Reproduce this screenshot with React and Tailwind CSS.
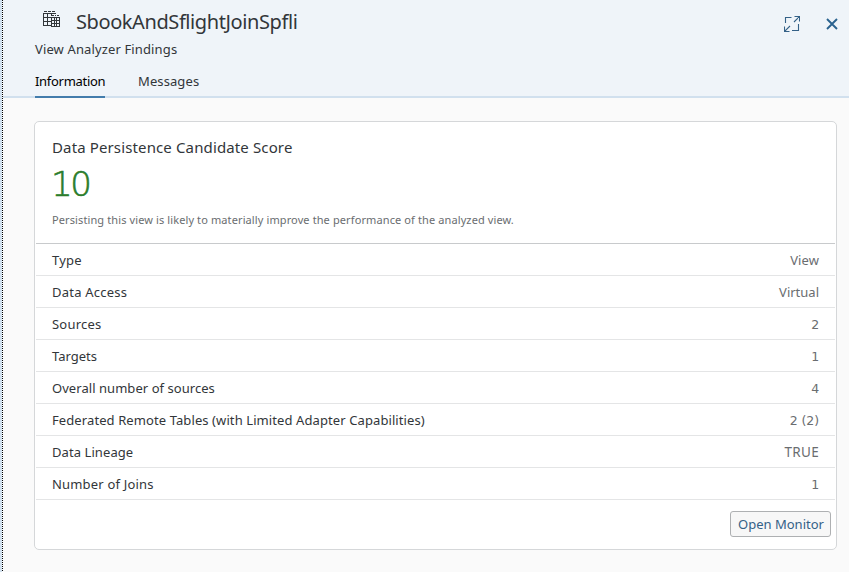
const rows = [
  ['Type', 'View', 'tracking-[.2px]', 'tracking-[.1px]'],
  ['Data Access', 'Virtual', 'tracking-[.22px]', 'tracking-normal'],
  ['Sources', '2', 'tracking-[.2px]', 'tracking-normal'],
  ['Targets', '1', 'tracking-normal', 'tracking-normal'],
  ['Overall number of sources', '4', 'tracking-[.05px]', 'tracking-normal'],
  ['Federated Remote Tables (with Limited Adapter Capabilities)', '2 (2)', 'tracking-[.095px]', 'tracking-normal'],
  ['Data Lineage', 'TRUE', 'tracking-[.08px]', 'text-[13.5px] tracking-[.3px]'],
  ['Number of Joins', '1', 'tracking-[.18px]', 'tracking-normal'],
];

function TablesIcon() {
  return (
    <svg className="h-[18px] w-[18px]" viewBox="0 0 18 18" fill="none" stroke="#32363a" shapeRendering="crispEdges">
      <path d="M2 1.5H5M6 1.5H9M10 1.5H13" />
      <path d="M1.5 3V16M1 3.5H14M1 7.5H9M1 11.5H9M1 15.5H9M5.5 3V16M9.5 3V6" />
      <path d="M10 5.5H12M13 5.5H14M15 5.5H17M9 7.5H18M9 10.5H18M9 13.5H18M9 16.5H18M9.5 7V17M12.5 7V17M14.5 7V17M17.5 7V17" />
    </svg>
  );
}

function ExpandIcon() {
  return (
    <svg className="h-4 w-4" viewBox="0 0 16 16" fill="none" stroke="#346187" strokeWidth="1.1">
      <path d="M1.5 7V1.5H7.5M14.5 8V14.5H8" />
      <path d="M10.5 .5H15.5V5.5M15.4 .6L10 6M5.5 15.5H.5V10.5M.6 15.4L6 10" />
    </svg>
  );
}

function CloseIcon() {
  return (
    <svg className="h-3 w-3" viewBox="0 0 12 12" fill="none" stroke="#2a628f" strokeWidth="1.9">
      <path d="M1 1L11 11M11 1L1 11" />
    </svg>
  );
}

export default function App() {
  return (
    <div className="flex h-[572px] w-[849px] overflow-hidden bg-[#fafafa] font-['Noto_Sans',sans-serif] text-[13px] text-[#32363a]">
      <div className="w-[2px] shrink-0 bg-[#d1e0ee]" />
      <div className="w-px shrink-0 bg-[repeating-linear-gradient(to_bottom,#000_0_1px,#fff_1px_2px)]" />
      <main className="flex min-w-0 grow flex-col">
        <header className="flex h-[98px] shrink-0 flex-col bg-[#eff4f9] bg-[linear-gradient(#d1e0ee,#d1e0ee)] bg-[length:100%_2px] bg-bottom bg-no-repeat pl-8">
          <div className="flex h-[38px] items-center pt-[9px]">
            <div className="mb-[9px] ml-[7px]"><TablesIcon /></div>
            <h1 className="mb-[4px] ml-[16px] whitespace-nowrap text-[20px] leading-6 tracking-[-.41px]">SbookAndSflightJoinSpfli</h1>
            <div className="ml-auto mr-[11px] flex items-center gap-[26px]">
              <button><ExpandIcon /></button>
              <button><CloseIcon /></button>
            </div>
          </div>
          <p className="h-[22px] leading-[22px] tracking-[.13px]">View Analyzer Findings</p>
          <nav className="flex h-[38px] gap-8 leading-[43px]">
            <button className="h-[38px] w-[70px] whitespace-nowrap border-b-2 border-[#427cac] text-left tracking-[-.3px] text-black">Information</button>
            <button className="ml-px whitespace-nowrap text-left tracking-[.1px]">Messages</button>
          </nav>
        </header>
        <section className="ml-[31px] mt-[23px] flex h-[429px] w-[803px] flex-col rounded-[5px] border border-[#d5d7d9] bg-white px-px">
          <div className="h-[122px] border-b border-[#c8cacc] pl-4">
            <h2 className="pt-[14px] text-[15px] leading-[22px] tracking-[.13px]">Data Persistence Candidate Score</h2>
            <div className="ml-[-1px] mt-[4px] font-['DejaVu_Sans',sans-serif] text-[34px] font-extralight leading-[44px] tracking-[-2.3px] text-[#2b7d2b] [-webkit-text-stroke:0.6px_#2b7d2b]">10</div>
            <p className="mt-[5px] text-[11px] leading-[18px] tracking-[.11px] text-[#6a6d70]">Persisting this view is likely to materially improve the performance of the analyzed view.</p>
          </div>
          <dl>
            {rows.map(([label, value, lt, vt]) => (
              <div key={label} className="flex h-8 items-center justify-between border-b border-[#e4e5e6] px-4 pt-[2px]">
                <dt className={lt}>{label}</dt>
                <dd className={/\d/.test(value) ? "font-['DejaVu_Sans',sans-serif] text-[12.5px] tracking-[-.1px] text-[#6a6d70] pt-px" : 'text-[#6a6d70] ' + vt}>{value}</dd>
              </div>
            ))}
          </dl>
          <div className="flex justify-end pr-1 pt-[11px]">
            <button className="h-[26px] w-[101px] whitespace-nowrap rounded-[3px] border border-[#aeb0b2] bg-[#f7f7f7] pl-px pt-px text-[#346187]">Open Monitor</button>
          </div>
        </section>
      </main>
    </div>
  );
}
